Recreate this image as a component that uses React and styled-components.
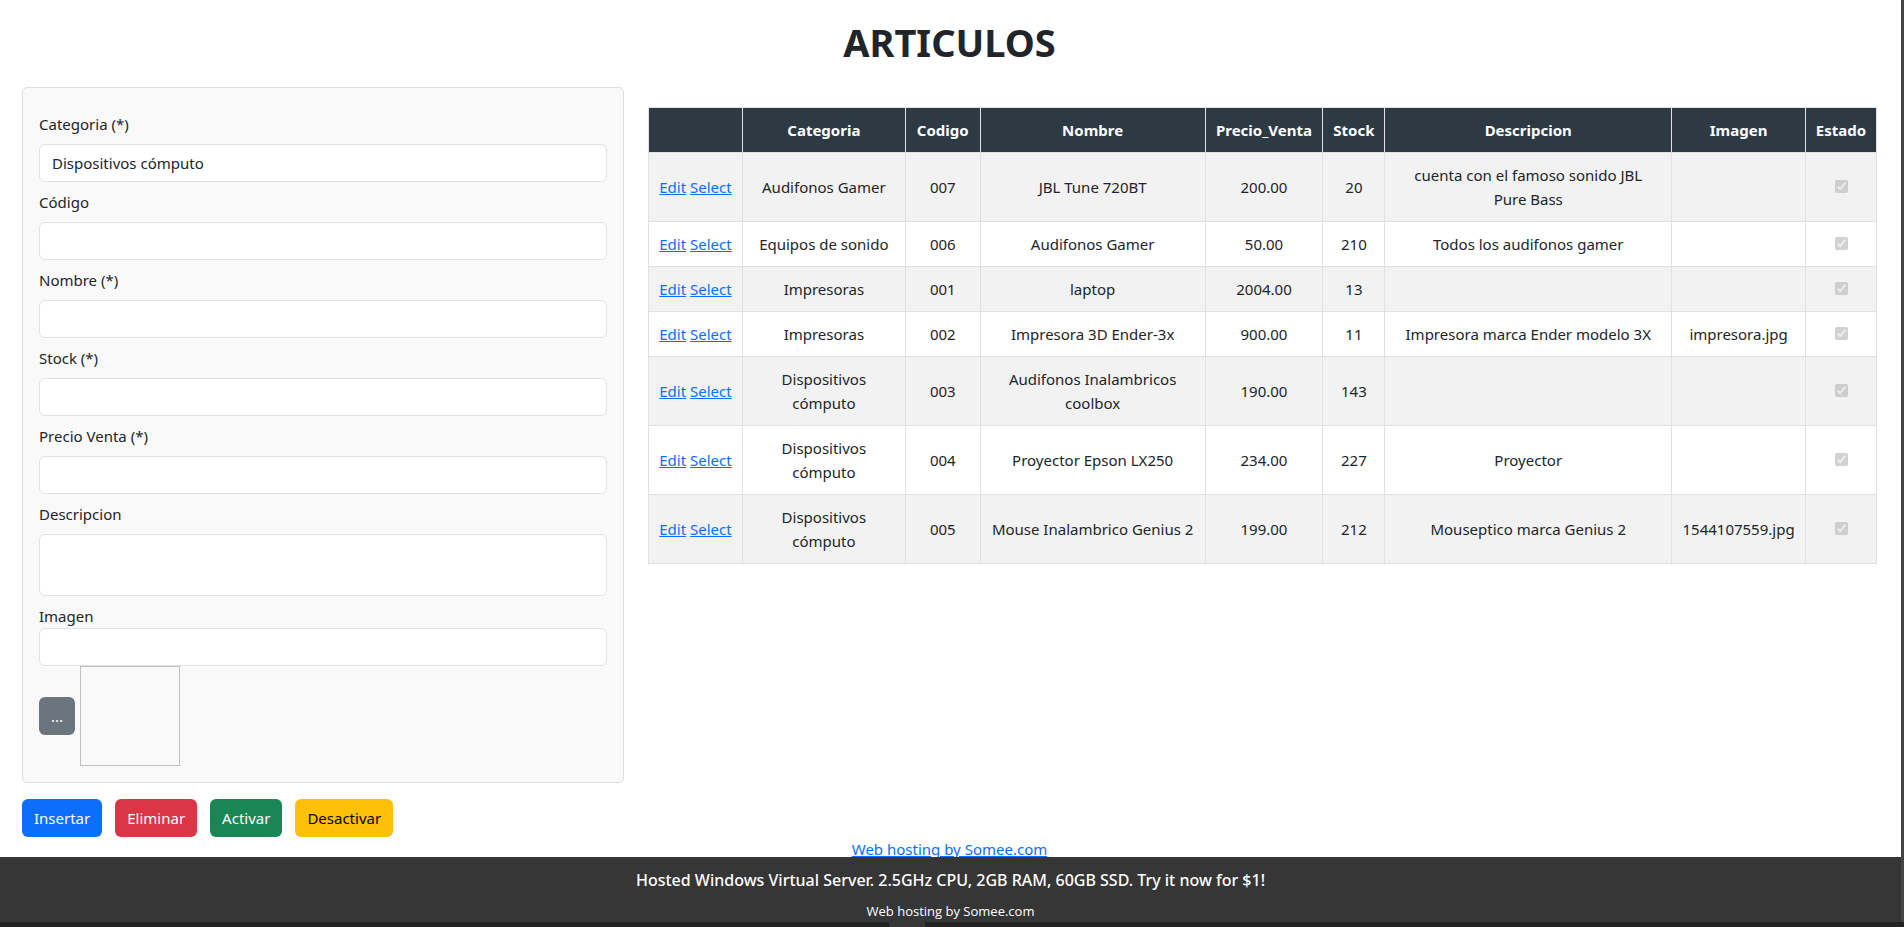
import React from "react";
import styled, { createGlobalStyle, css } from "styled-components";

const GlobalStyle = createGlobalStyle`
  *, *::before, *::after { box-sizing: border-box; }
  body {
    margin: 0;
    background: #fff;
    color: #212529;
    font-family: "Segoe UI", "Noto Sans", "Open Sans", sans-serif;
    font-size: 15px;
    line-height: 24px;
  }
`;

const Frame = styled.div`
  height: 100vh;
  overflow: hidden;
  display: flex;
  flex-direction: column;
`;

const Page = styled.div`
  flex: 1;
  min-height: 0;
  border-right: 3px solid #444;
  display: flex;
  flex-direction: column;
`;

const BottomEdge = styled.div`
  flex: none;
  height: 5px;
  padding-right: 90px;
  background: #202224;
  display: flex;
  justify-content: center;
`;

const EdgeTab = styled.div`
  width: 36px;
  background: #363636;
`;

const Main = styled.main`
  flex: 1;
  min-height: 0;
  padding: 18px 24px 0 22px;
`;

const Title = styled.h1`
  margin: 0 0 21px;
  text-align: center;
  font-size: 38px;
  line-height: 48px;
  font-weight: 700;
`;

const Columns = styled.div`
  display: grid;
  grid-template-columns: 602fr 1229fr;
  column-gap: 24px;
  align-items: start;
`;

const Panel = styled.section`
  padding: 24px 16px 16px;
  border: 1px solid #ddd;
  border-radius: 5px;
  background: #f9f9f9;
`;

const Field = styled.div`
  display: flex;
  flex-direction: column;
  gap: ${(p) => (p.$tight ? "0" : "8px")};
  margin-bottom: ${(p) => (p.$tight ? "0" : "8px")};
`;

const control = css`
  display: block;
  width: 100%;
  height: 38px;
  margin: 0;
  padding: 6px 12px;
  border: 1px solid #dee2e6;
  border-radius: 6px;
  background: #fff;
  color: #212529;
  font: inherit;
`;

const Input = styled.input`${control}`;
const Select = styled.select`
  ${control}
  appearance: none;
`;
const TextArea = styled.textarea`
  ${control}
  height: 62px;
  resize: none;
`;

const Upload = styled.div`
  display: flex;
  align-items: center;
  gap: 5px;
`;

const Preview = styled.div`
  width: 100px;
  height: 100px;
  border: 1px solid #c0c0c0;
`;

const tones = {
  primary: ["#0d6efd", "#fff"],
  danger: ["#dc3545", "#fff"],
  success: ["#198754", "#fff"],
  warning: ["#ffc107", "#000"],
  secondary: ["#6c757d", "#fff"],
};

const Button = styled.button`
  height: 38px;
  padding: 0 12px;
  border: 0;
  border-radius: 6px;
  background: ${(p) => tones[p.$tone][0]};
  color: ${(p) => tones[p.$tone][1]};
  font: inherit;
`;

const Actions = styled.div`
  display: flex;
  gap: 13px;
  margin-top: 16px;
`;

const Table = styled.table`
  width: 100%;
  margin-top: 20px;
  table-layout: fixed;
  border-collapse: collapse;
  text-align: center;
  th, td {
    padding: 10px 0;
    border: 1px solid #dee2e6;
    vertical-align: middle;
  }
  th {
    background: #2d3a43;
    color: #fff;
    font-weight: 700;
  }
  tbody tr:nth-child(odd) { background: #f2f2f2; }
`;

const Col = styled.col`
  width: ${(p) => (p.$share / 1229) * 100}%;
`;

const Cell = styled.td`
  && { padding: 10px ${(p) => p.$inset || 0}px; }
`;

const Link = styled.a`
  color: #0d6efd;
  text-decoration: underline;
`;

const Check = styled.input`
  width: 13px;
  height: 13px;
  margin: 3px 0;
`;

const Hosting = styled.div`
  text-align: center;
`;

const Footer = styled.footer`
  flex: none;
  position: relative;
  height: 65px;
  padding-top: 11px;
  background: #363636;
  color: #fff;
  text-align: center;
`;

const Promo = styled.p`
  margin: 0 0 8px;
  font-size: 16px;
  font-weight: 500;
  line-height: 24px;
`;

const Credit = styled.p`
  margin: 0;
  font-family: "Segoe UI", "Open Sans", sans-serif;
  font-size: 13px;
  line-height: 22px;
`;

const shares = [94, 163, 75, 225, 118, 62, 287, 134, 71];
const headers = ["", "Categoria", "Codigo", "Nombre", "Precio_Venta", "Stock", "Descripcion", "Imagen", "Estado"];
const insets = [8, 8, 8, 8, 8, 16, 0];
const rows = [
  ["Audifonos Gamer", "007", "JBL Tune 720BT", "200.00", "20", "cuenta con el famoso sonido JBL Pure Bass", ""],
  ["Equipos de sonido", "006", "Audifonos Gamer", "50.00", "210", "Todos los audifonos gamer", ""],
  ["Impresoras", "001", "laptop", "2004.00", "13", "", ""],
  ["Impresoras", "002", "Impresora 3D Ender-3x", "900.00", "11", "Impresora marca Ender modelo 3X", "impresora.jpg"],
  ["Dispositivos cómputo", "003", "Audifonos Inalambricos coolbox", "190.00", "143", "", ""],
  ["Dispositivos cómputo", "004", "Proyector Epson LX250", "234.00", "227", "Proyector", ""],
  ["Dispositivos cómputo", "005", "Mouse Inalambrico Genius 2", "199.00", "212", "Mouseptico marca Genius 2", "1544107559.jpg"],
];

const textFields = [
  ["codigo", "Código"],
  ["nombre", "Nombre (*)"],
  ["stock", "Stock (*)"],
  ["precio", "Precio Venta (*)"],
];

export default function App() {
  return (
    <Frame>
      <GlobalStyle />
      <Page>
        <Main>
          <Title>ARTICULOS</Title>
          <Columns>
            <div>
              <Panel>
                <Field>
                  <label htmlFor="categoria">Categoria (*)</label>
                  <Select id="categoria">
                    <option>Dispositivos cómputo</option>
                  </Select>
                </Field>
                {textFields.map(([id, label]) => (
                  <Field key={id}>
                    <label htmlFor={id}>{label}</label>
                    <Input id={id} type="text" />
                  </Field>
                ))}
                <Field>
                  <label htmlFor="descripcion">Descripcion</label>
                  <TextArea id="descripcion" />
                </Field>
                <Field $tight>
                  <label htmlFor="imagen">Imagen</label>
                  <Input id="imagen" type="text" />
                </Field>
                <Upload>
                  <Button type="button" $tone="secondary">...</Button>
                  <Preview />
                </Upload>
              </Panel>
              <Actions>
                <Button type="button" $tone="primary">Insertar</Button>
                <Button type="button" $tone="danger">Eliminar</Button>
                <Button type="button" $tone="success">Activar</Button>
                <Button type="button" $tone="warning">Desactivar</Button>
              </Actions>
            </div>
            <Table>
              <colgroup>
                {shares.map((s, i) => <Col key={i} $share={s} />)}
              </colgroup>
              <thead>
                <tr>{headers.map((h) => <th key={h} scope="col">{h}</th>)}</tr>
              </thead>
              <tbody>
                {rows.map((row) => (
                  <tr key={row[1]}>
                    <Cell><Link href="#edit">Edit</Link> <Link href="#select">Select</Link></Cell>
                    {row.map((value, i) => <Cell key={i} $inset={insets[i]}>{value}</Cell>)}
                    <Cell><Check type="checkbox" checked disabled readOnly aria-label={`Estado ${row[1]}`} /></Cell>
                  </tr>
                ))}
              </tbody>
            </Table>
          </Columns>
          <Hosting><Link href="#hosting">Web hosting by Somee.com</Link></Hosting>
        </Main>
        <Footer>
          <Promo>Hosted Windows Virtual Server. 2.5GHz CPU, 2GB RAM, 60GB SSD. Try it now for $1!</Promo>
          <Credit>Web hosting by Somee.com</Credit>
        </Footer>
      </Page>
      <BottomEdge><EdgeTab /></BottomEdge>
    </Frame>
  );
}
